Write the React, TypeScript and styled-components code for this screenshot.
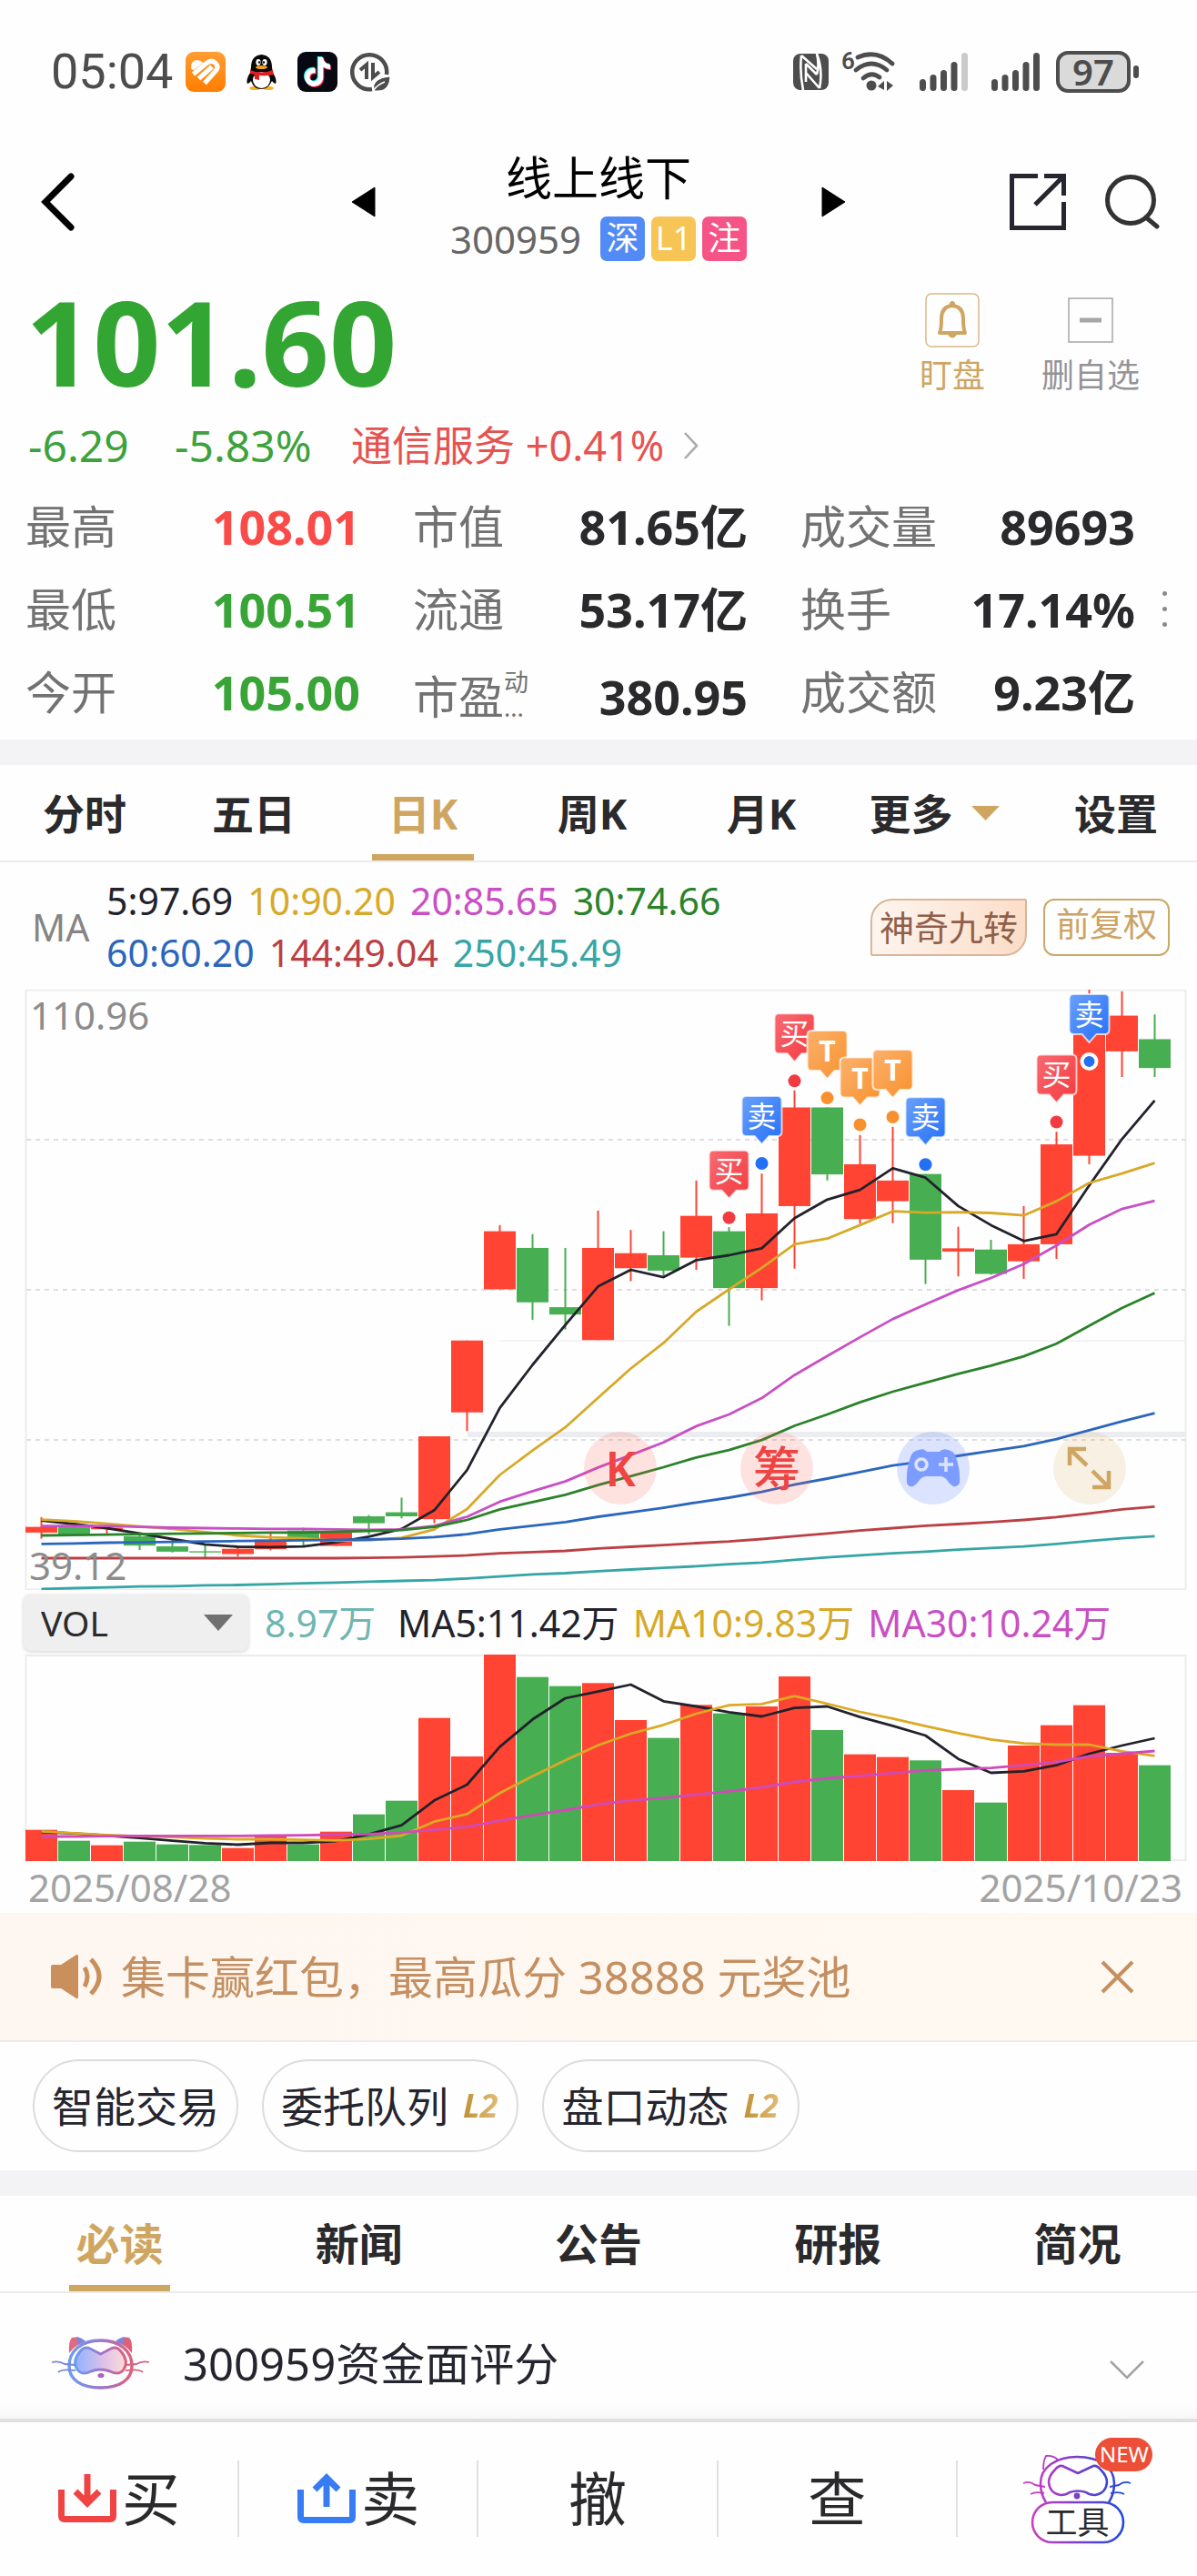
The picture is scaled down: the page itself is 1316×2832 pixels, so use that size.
import React from "react";
import styled, { createGlobalStyle } from "styled-components";
import { FaTiktok } from "react-icons/fa6";

const GOLD = "#cfa661";
const RED = "#ff4433";
const GREEN = "#48ae52";
const INK = "#2a2a2c";

const GlobalStyle = createGlobalStyle`
  * { box-sizing: border-box; }
  body {
    margin: 0;
    background: #fefefe;
    color: ${INK};
    font-family: "Noto Sans", "Noto Sans CJK SC", sans-serif;
  }
  button, select {
    font-family: inherit;
    color: inherit;
    background: none;
    border: 0;
    padding: 0;
    margin: 0;
    line-height: inherit;
  }
  svg { display: block; }
  h1, p, dl, dt, dd { margin: 0; font-weight: 400; }
`;

/* ---------- status bar ---------- */

const StatusBar = styled.div`
  display: flex;
  align-items: center;
  justify-content: space-between;
  height: 158px;
  padding: 0 73px 0 56px;
`;

const StatusLeft = styled.div`
  display: flex;
  align-items: center;
  gap: 14px;
`;

const StatusIcons = styled.div`
  display: flex;
  align-items: center;
  gap: 23px;
`;

const StatusRight = styled.div`
  display: flex;
  align-items: center;
  gap: 26px;
`;

const Clock = styled.span`
  font-family: Roboto, sans-serif;
  font-size: 54px;
  line-height: 60px;
  color: #4d4d4d;
`;

const Battery = styled.span`
  position: relative;
  margin-left: -8px;
  display: flex;
  align-items: center;
  justify-content: center;
  width: 82px;
  height: 46px;
  border: 4px solid #4d4d4d;
  border-radius: 13px;
  background: #dadada;
  color: #4d4d4d;
  font-size: 40px;
  font-weight: 600;
  line-height: 40px;
  &::after {
    content: "";
    position: absolute;
    right: -13px;
    width: 6px;
    height: 14px;
    border-radius: 3px;
    background: #4d4d4d;
  }
`;

const AppIcon = () => (
  <svg width="44" height="44" viewBox="0 0 44 44" aria-hidden="true">
    <defs>
      <linearGradient id="appOrange" x1="0" y1="0" x2="0" y2="1">
        <stop offset="0" stopColor="#ff9d33" />
        <stop offset="1" stopColor="#ff7e00" />
      </linearGradient>
    </defs>
    <rect width="44" height="44" rx="9" fill="url(#appOrange)" />
    <path d="M6.500 19 Q5 12 10 9.500 Q15 8 19.500 12 L9 20 Z" fill="#fff" />
    <g fill="none" stroke="#fff" strokeWidth="5.2">
      <path d="M8.500 24.500 L23 12.500 Q29 8 33 12.500 Q37 17 33 21 L21 34.500" />
      <path d="M14.500 29.500 L29 16.500" />
    </g>
  </svg>
);

const PenguinIcon = () => (
  <svg width="33" height="39" viewBox="0 0 33 39" aria-hidden="true">
    <ellipse cx="9" cy="37" rx="6" ry="2.2" fill="#f9b320" />
    <ellipse cx="24" cy="37" rx="6" ry="2.2" fill="#f9b320" />
    <path d="M4 20 Q-1 28 1 32 Q3 32 5 29 Q8 38 16 38 Q24 38 28 29 Q30 32 32 32 Q34 28 29 20 L28 14 Q28 1 16.500 0 Q5 1 5 14 Z" fill="#090909" />
    <ellipse cx="16.500" cy="28" rx="9.500" ry="9" fill="#fff" />
    <path d="M4 17 Q16 22 29 17 L30 22 Q22 24 14 23 L14 28 L9 27 L9 22 L4 21 Z" fill="#dd1f22" />
    <ellipse cx="13" cy="8.500" rx="2.600" ry="3.400" fill="#fff" />
    <ellipse cx="20" cy="8.500" rx="2.600" ry="3.400" fill="#fff" />
    <circle cx="14" cy="8.500" r="1.200" />
    <circle cx="19" cy="8.500" r="1.200" />
    <ellipse cx="16.500" cy="14" rx="6.500" ry="2" fill="#f5a21b" />
  </svg>
);

const TikTokTile = styled.span`
  position: relative;
  width: 44px;
  height: 44px;
  border-radius: 9px;
  background: #070812;
`;

const TikTokLayer = styled(FaTiktok)<{ $shift: number; $color: string }>`
  position: absolute;
  left: ${(p) => 6 + p.$shift}px;
  top: ${(p) => 6 + p.$shift}px;
  width: 32px;
  height: 32px;
  color: ${(p) => p.$color};
`;

const DataSaverIcon = () => (
  <svg width="44" height="44" viewBox="0 0 44 44" fill="none" stroke="#4d4d4d" aria-hidden="true">
    <path d="M24 41 A19 19 0 1 1 40 25" strokeWidth="4.500" />
    <path d="M18 30 V14 L11 20" strokeWidth="4" />
    <path d="M25 12 V28 L32 22" strokeWidth="4" />
    <path d="M27 42 Q24 30 43 28 Q42 43 30 42 Z" fill="#4d4d4d" strokeWidth="1" />
    <path d="M25 43 Q30 36 38 33" stroke="#fff" strokeWidth="1.600" />
  </svg>
);

const NfcIcon = () => (
  <svg width="39" height="40" viewBox="0 0 39 40" fill="none" aria-hidden="true">
    <rect width="39" height="40" rx="8" fill="#4d4d4d" />
    <path d="M9 2 Q7 20 11 40 M9 2 L26 17 M14 11 V31 M14 11 L26 23 M14 21 L29 38 M26 0 Q29 12 26 23 M26 0 Q33 18 29 38" stroke="#fff" strokeWidth="2.600" />
  </svg>
);

const WifiSix = styled.span`
  position: relative;
  display: block;
  width: 60px;
  height: 46px;
`;

const WifiGeneration = styled.span`
  position: absolute;
  left: 0;
  top: -2px;
  font-family: Roboto, sans-serif;
  font-size: 26px;
  line-height: 26px;
  font-weight: 600;
  color: #4d4d4d;
`;

const WifiIcon = () => (
  <svg width="60" height="46" viewBox="0 0 60 46" fill="none" stroke="#4d4d4d" strokeWidth="4.800" strokeLinecap="round" aria-hidden="true">
    <path d="M18 7 Q39 -2 56 14" />
    <path d="M16 21 Q33 7 50 21" />
    <path d="M24 30 Q33 22 42 29" />
    <circle cx="33" cy="38" r="5.500" fill="#4d4d4d" stroke="none" />
    <path d="M40 39 L47 33 V43 Z M50 33 V44 L57 38 Z" fill="#4d4d4d" stroke="none" />
  </svg>
);

const SIGNAL_BARS = [13, 18, 23, 32, 42];

const SignalIcon = ({ level }: { level: number }) => (
  <svg width="53" height="42" viewBox="0 0 53 42" aria-hidden="true">
    {SIGNAL_BARS.map((h, i) => (
      <rect key={h} x={i * 11.5} y={42 - h} width="7" height={h} rx="3.5" fill={i < level ? "#4d4d4d" : "#cacaca"} />
    ))}
  </svg>
);

/* ---------- header ---------- */

const Header = styled.header`
  display: grid;
  grid-template-columns: 1fr auto 1fr;
  padding: 0 40px;
`;

const IconButton = styled.button`
  display: flex;
  align-items: center;
  height: 128px;
`;

const HeaderCenter = styled.div`
  display: flex;
  gap: 82px;
`;

const TitleBlock = styled.div`
  display: flex;
  flex-direction: column;
  align-items: center;
  gap: 13px;
  padding-top: 7px;
`;

const Title = styled.h1`
  font-size: 51px;
  line-height: 60px;
  color: #000;
`;

const CodeRow = styled.div`
  display: flex;
  align-items: center;
  gap: 7px;
`;

const Code = styled.span`
  margin-right: 14px;
  font-size: 42px;
  line-height: 49px;
  color: #666;
`;

const Tag = styled.span<{ $bg: string }>`
  width: 49px;
  height: 49px;
  border-radius: 7px;
  background: ${(p) => p.$bg};
  color: #fff;
  font-size: 36px;
  line-height: 48px;
  text-align: center;
`;

const HeaderActions = styled.div`
  display: flex;
  justify-content: flex-end;
  gap: 42px;
`;

/* ---------- quote ---------- */

const Quote = styled.section`
  padding: 28px 0 7px 28px;
`;

const PriceRow = styled.div`
  display: flex;
  justify-content: space-between;
  padding-right: 63px;
`;

const Price = styled.p`
  font-size: 130px;
  font-weight: 700;
  line-height: 120px;
  color: #33a533;
`;

const WatchActions = styled.div`
  display: flex;
  gap: 62px;
  padding-top: 7px;
`;

const WatchButton = styled.button<{ $color: string }>`
  display: flex;
  flex-direction: column;
  align-items: center;
  gap: 11px;
  color: ${(p) => p.$color};
  font-size: 36px;
  line-height: 40px;
`;

const WatchIcon = styled.span`
  display: flex;
  align-items: center;
  height: 60px;
`;

const ChangeRow = styled.div`
  display: flex;
  align-items: center;
  margin-top: 23px;
  font-size: 48px;
  line-height: 64px;
  color: #3da23b;
`;

const Change = styled.span`
  width: 164px;
  padding-left: 3px;
`;

const ChangeRate = styled.span`
  width: 194px;
`;

const SectorLink = styled.a`
  display: flex;
  align-items: center;
  gap: 21px;
  color: #e65250;
  font-size: 45px;
  text-decoration: none;
`;

const QuoteBody = styled.div`
  display: flex;
  align-items: center;
  justify-content: space-between;
  margin-top: 11px;
  padding-right: 33px;
`;

const StatGrid = styled.dl`
  flex: 1;
  display: grid;
  grid-template-columns: repeat(3, 1fr);
  column-gap: 58px;
  margin-right: 30px;
`;

const Stat = styled.div<{ $noted?: boolean }>`
  display: flex;
  align-items: center;
  justify-content: space-between;
  height: 91px;
  padding-top: ${(p) => (p.$noted ? 10 : 0)}px;
  font-size: 50px;
  line-height: 60px;
`;

const StatLabel = styled.dt`
  display: flex;
  color: #727272;
`;

const StatValue = styled.dd<{ $color?: string }>`
  font-size: 52px;
  font-weight: 700;
  color: ${(p) => p.$color || INK};
`;

const StatNote = styled.span`
  display: flex;
  flex-direction: column;
  font-size: 27px;
  line-height: 28px;
`;

const MoreDots = styled.button`
  display: flex;
  flex-direction: column;
  gap: 12px;
`;

const Dot = styled.span`
  width: 5px;
  height: 5px;
  border-radius: 50%;
  background: #8a8a8a;
`;

const Divider = styled.div`
  height: 28px;
  background: #f3f3f5;
`;

/* ---------- tabs ---------- */

const PeriodTabs = styled.nav`
  display: grid;
  grid-template-columns: repeat(5, 186fr) 194fr 192fr;
  border-bottom: 2px solid #ebebec;
`;

const NewsTabs = styled.nav`
  display: grid;
  grid-template-columns: repeat(5, 1fr);
  border-bottom: 2px solid #ebebec;
`;

const Tab = styled.button<{ $active?: boolean; $size: number }>`
  display: flex;
  align-items: center;
  justify-content: center;
  gap: 20px;
  height: 105px;
  border-top: 7px solid transparent;
  border-bottom: 7px solid transparent;
  border-image: ${(p) =>
    p.$active
      ? `linear-gradient(90deg, transparent calc(50% - 56px), ${GOLD} calc(50% - 56px), ${GOLD} calc(50% + 56px), transparent calc(50% + 56px)) 0 0 7 0`
      : "none"};
  font-size: ${(p) => p.$size}px;
  font-weight: 700;
  line-height: 60px;
  color: ${(p) => (p.$active ? GOLD : INK)};
`;

const SettingsTab = styled(Tab)`
  padding-left: 14px;
`;

/* ---------- K-line chart ---------- */

const MaHeader = styled.div`
  display: flex;
  align-items: center;
  padding: 14px 30px 12px 35px;
`;

const MaName = styled.span`
  width: 82px;
  font-size: 41px;
  line-height: 57px;
  color: #858585;
`;

const MaLines = styled.div`
  flex: 1;
  font-size: 41px;
  line-height: 57px;
`;

const MaLine = styled.div`
  display: flex;
  gap: 16px;
`;

const Colored = styled.span<{ $color: string }>`
  color: ${(p) => p.$color};
`;

const NineTurnButton = styled.button`
  width: 172px;
  height: 63px;
  margin-right: 18px;
  border: 2px solid #dcb597;
  border-radius: 24px 2px 24px 2px;
  background: linear-gradient(100deg, #fef6f1, #fbdcc6);
  color: #8f5f4b;
  font-size: 38px;
  line-height: 56px;
`;

const AdjustButton = styled.button`
  width: 139px;
  height: 63px;
  padding-bottom: 6px;
  border: 2px solid #c9aa66;
  border-radius: 12px;
  color: #cba465;
  font-size: 37px;
  line-height: 52px;
`;

const ChartArea = styled.div`
  position: relative;
`;

const ChartSvg = styled.svg`
  width: 100%;
  height: auto;
  font-family: "Noto Sans", "Noto Sans CJK SC", sans-serif;
`;

const FloatingTools = styled.div`
  position: absolute;
  right: 78px;
  bottom: 94px;
  display: flex;
  gap: 92px;
`;

const FloatingButton = styled.button<{ $bg: string; $color: string }>`
  display: flex;
  align-items: center;
  justify-content: center;
  width: 80px;
  height: 80px;
  border-radius: 50%;
  background: ${(p) => p.$bg};
  color: ${(p) => p.$color};
  font-size: 52px;
  font-weight: 500;
  line-height: 60px;
`;

const KLabel = styled.span`
  font-weight: 600;
`;

type Candle = [up: 0 | 1, top: number, bottom: number, high: number, low: number];

/* Levels run from 20 at the top edge of the plot to 1496 at its bottom edge. */
const CANDLES: Candle[] = [
  [1, 1343, 1357, 1319, 1372],
  [0, 1344, 1362, 1344, 1366],
  [1, 1345, 1349, 1340, 1363],
  [0, 1366, 1389, 1357, 1400],
  [0, 1391, 1404, 1374, 1406],
  [0, 1403, 1406, 1385, 1418],
  [1, 1397, 1410, 1390, 1416],
  [1, 1374, 1398, 1360, 1401],
  [0, 1352, 1376, 1345, 1393],
  [1, 1357, 1390, 1357, 1390],
  [0, 1317, 1334, 1314, 1362],
  [0, 1307, 1317, 1271, 1322],
  [1, 1120, 1324, 1120, 1334],
  [1, 884, 1061, 884, 1107],
  [1, 615, 758, 600, 758],
  [0, 656, 790, 622, 833],
  [0, 802, 820, 656, 857],
  [1, 656, 883, 564, 883],
  [1, 669, 706, 612, 738],
  [0, 674, 712, 615, 724],
  [1, 577, 680, 490, 710],
  [0, 615, 755, 605, 848],
  [1, 571, 755, 473, 785],
  [1, 310, 553, 268, 707],
  [0, 310, 475, 310, 490],
  [1, 450, 585, 378, 596],
  [1, 490, 541, 358, 595],
  [0, 474, 685, 474, 745],
  [1, 657, 665, 604, 726],
  [0, 660, 720, 636, 722],
  [1, 647, 689, 553, 732],
  [1, 401, 647, 370, 683],
  [1, 70, 429, 20, 450],
  [1, 84, 172, 24, 235],
  [0, 142, 213, 81, 235],
];

const MA_SERIES: { color: string; levels: number[] }[] = [
  { color: "#bb4045", levels: [1420, 1420, 1420, 1420, 1420, 1420, 1420, 1420, 1420, 1420, 1419, 1418, 1416, 1413, 1408, 1405, 1402, 1396, 1392, 1388, 1383, 1379, 1373, 1366, 1359, 1352, 1346, 1340, 1336, 1331, 1326, 1319, 1310, 1300, 1293] },
  { color: "#36a5a5", levels: [1496, 1494, 1492, 1490, 1489, 1487, 1486, 1484, 1482, 1480, 1478, 1476, 1474, 1470, 1465, 1460, 1457, 1452, 1448, 1444, 1440, 1435, 1431, 1424, 1418, 1413, 1408, 1404, 1399, 1395, 1391, 1385, 1378, 1371, 1366] },
  { color: "#22222c", levels: [1327, 1336, 1346, 1359, 1373, 1386, 1392, 1393, 1391, 1381, 1367, 1348, 1302, 1203, 1050, 944, 846, 751, 710, 728, 686, 674, 657, 583, 537, 513, 460, 483, 553, 600, 639, 622, 502, 388, 293] },
  { color: "#d7a928", levels: [1325, 1329, 1335, 1342, 1348, 1356, 1364, 1369, 1371, 1377, 1376, 1370, 1349, 1299, 1215, 1155, 1098, 1025, 953, 890, 813, 758, 705, 647, 633, 600, 566, 569, 568, 570, 576, 541, 496, 473, 447] },
  { color: "#c84fc4", levels: [1341, 1341, 1341, 1343, 1345, 1346, 1347, 1348, 1348, 1349, 1350, 1349, 1341, 1318, 1281, 1255, 1231, 1197, 1166, 1135, 1095, 1066, 1026, 969, 922, 876, 831, 795, 760, 730, 696, 650, 599, 560, 540] },
  { color: "#2a822a", levels: [1364, 1363, 1362, 1361, 1360, 1359, 1358, 1357, 1357, 1355, 1353, 1351, 1343, 1326, 1300, 1282, 1264, 1240, 1218, 1196, 1172, 1154, 1129, 1094, 1066, 1036, 1010, 988, 966, 946, 923, 892, 848, 804, 767] },
  { color: "#2b66bd", levels: [1385, 1384, 1382, 1381, 1380, 1379, 1378, 1377, 1376, 1375, 1374, 1372, 1368, 1361, 1349, 1340, 1331, 1318, 1307, 1296, 1283, 1271, 1257, 1239, 1224, 1208, 1192, 1181, 1168, 1156, 1144, 1127, 1105, 1083, 1063] },
];

type MarkKind = "买" | "卖" | "T";

const MARKS: { index: number; level: number; kind: MarkKind }[] = [
  { index: 21, level: 416, kind: "买" },
  { index: 22, level: 282, kind: "卖" },
  { index: 23, level: 79, kind: "买" },
  { index: 24, level: 121, kind: "T" },
  { index: 25, level: 187, kind: "T" },
  { index: 26, level: 168, kind: "T" },
  { index: 27, level: 285, kind: "卖" },
  { index: 31, level: 180, kind: "买" },
  { index: 32, level: 31, kind: "卖" },
];

const MARK_FILL: Record<MarkKind, { id: string; from: string; to: string }> = {
  买: { id: "markBuy", from: "#f96a72", to: "#f23b40" },
  卖: { id: "markSell", from: "#6aa0fb", to: "#2470f5" },
  T: { id: "markT", from: "#fcb16d", to: "#f8912d" },
};

const cx = (i: number) => 45.5 + i * 36;
const levelY = (level: number) => (level - 20) / 2.24;
const volumeY = (level: number) => (level - 241) / 3;

const linePoints = (levels: number[], scale: (v: number) => number) =>
  levels.map((v, i) => `${cx(i)},${scale(v).toFixed(1)}`).join(" ");

const KLineChart = () => (
  <ChartSvg viewBox="0 0 1316 660" role="img" aria-label="日K线图">
    <defs>
      {Object.values(MARK_FILL).map((f) => (
        <linearGradient key={f.id} id={f.id} x1="0" y1="0" x2="1" y2="1">
          <stop offset="0" stopColor={f.from} />
          <stop offset="1" stopColor={f.to} />
        </linearGradient>
      ))}
    </defs>
    <rect x="28.5" y="0.5" width="1275" height="659" fill="none" stroke="#ececee" strokeWidth="2" />
    {[165, 330, 495].map((y) => (
      <line key={y} x1="29" x2="1303" y1={y} y2={y} stroke="#dedede" strokeWidth="2" strokeDasharray="5 5" />
    ))}
    <line x1="550" x2="1303" y1="386" y2="386" stroke="#f3f3f3" strokeWidth="2" />
    <line x1="514" x2="1303" y1="489" y2="489" stroke="#ecedf1" strokeWidth="6" />
    {CANDLES.map(([up, top, bottom, high, low], i) => (
      <g key={i} fill={up ? RED : GREEN}>
        <rect x={cx(i) - 1} y={levelY(high)} width="2" height={levelY(low) - levelY(high)} />
        <rect x={cx(i) - 17.5} y={levelY(top)} width="35" height={levelY(bottom) - levelY(top)} />
      </g>
    ))}
    {MA_SERIES.map((s) => (
      <polyline key={s.color} points={linePoints(s.levels, levelY)} fill="none" stroke={s.color} strokeWidth="2.8" strokeLinejoin="round" />
    ))}
    {MARKS.map(({ index, level, kind }) => {
      const f = MARK_FILL[kind];
      return (
        <g key={index} transform={`translate(${cx(index)} ${levelY(level)})`}>
          <path
            d="M-17 0 H17 Q22 0 22 5 V39 Q22 44 17 44 H8 L0 53 L-8 44 H-17 Q-22 44 -22 39 V5 Q-22 0 -17 0 Z"
            fill={`url(#${f.id})`}
            stroke="#fff"
            strokeOpacity="0.7"
            strokeWidth="2"
          />
          <text y="34" textAnchor="middle" fontSize="32" fontWeight={kind === "T" ? 700 : 400} fill="#fff">
            {kind}
          </text>
          <circle cy="74" r={index === 32 ? 8 : 7} fill={f.to} stroke="#fff" strokeWidth={index === 32 ? 4 : 0} />
        </g>
      );
    })}
    <text x="33" y="44" fontSize="42" fill="#8c8c8c">110.96</text>
    <text x="32" y="649" fontSize="42" fill="#8c8c8c">39.12</text>
  </ChartSvg>
);

const GamepadIcon = () => (
  <svg width="60" height="44" viewBox="0 0 60 44" aria-hidden="true">
    <path d="M14 2 Q20 0 23 4 H37 Q40 0 46 2 Q53 3 55 10 Q60 24 59 38 Q57 43 52 42 Q48 40 45 35 Q42 31 37 31 H23 Q18 31 15 35 Q12 40 8 42 Q2 43 1 38 Q0 24 5 10 Q7 3 14 2 Z" fill="#7d9cff" />
    <circle cx="17" cy="18" r="6" fill="none" stroke="#dbe3ff" strokeWidth="3.500" />
    <path d="M44 10 V26 M36 18 H52" stroke="#dbe3ff" strokeWidth="3.500" />
  </svg>
);

const ExpandIcon = () => (
  <svg width="50" height="48" viewBox="0 0 50 48" fill="none" stroke={GOLD} strokeWidth="4.500" aria-hidden="true">
    <path d="M21 3 H3 V21 M3 3 L22 21 M28 27 L46 45 M46 27 V45 H28" />
  </svg>
);

/* ---------- volume chart ---------- */

const VolumeHeader = styled.div`
  display: flex;
  align-items: center;
  height: 71px;
  padding-left: 26px;
  font-size: 41px;
  line-height: 60px;
`;

const IndicatorPicker = styled.div`
  position: relative;
  width: 247px;
  margin-right: 18px;
`;

const IndicatorSelect = styled.select`
  appearance: none;
  display: block;
  width: 100%;
  height: 62px;
  padding-left: 19px;
  border-radius: 8px;
  background: #efefef;
  box-shadow: 0 1px 4px rgba(0, 0, 0, 0.18);
  color: #2b2b2b;
  font-size: 39px;
`;

const PickerArrow = styled.span`
  position: absolute;
  right: 17px;
  top: 22px;
  border: 16px solid transparent;
  border-top: 18px solid #707070;
  border-bottom: 0;
  pointer-events: none;
`;

const VolumeNow = styled.span`
  width: 146px;
  color: #6fb6b2;
`;

const VolumeAverages = styled.div`
  display: flex;
  gap: 15px;
`;

const VOLUMES = [
  819, 855, 870, 858, 867, 869, 879, 839, 867, 825, 768, 723, 450, 577, 241, 315, 345, 335, 457, 516, 407, 435, 412,
  313, 490, 570, 579, 590, 688, 729, 541, 474, 408, 565, 606,
];

const VOLUME_MA: { color: string; levels: number[] }[] = [
  { color: "#22222c", levels: [826, 831, 838, 846, 855, 863, 868, 862, 862, 856, 834, 804, 722, 670, 545, 455, 385, 363, 340, 395, 412, 431, 445, 417, 412, 447, 476, 508, 585, 631, 626, 606, 568, 541, 517] },
  { color: "#dba924", levels: [824, 830, 836, 840, 843, 847, 850, 850, 852, 854, 849, 838, 792, 767, 698, 642, 590, 540, 502, 473, 436, 408, 404, 378, 403, 430, 452, 477, 500, 521, 534, 538, 538, 560, 575] },
  { color: "#d04ab8", levels: [841, 841, 840, 839, 839, 839, 839, 838, 837, 835, 833, 828, 819, 809, 789, 771, 754, 735, 722, 714, 703, 692, 679, 661, 649, 641, 632, 623, 619, 615, 606, 595, 577, 568, 559] },
];

const VolumeChart = () => (
  <ChartSvg viewBox="0 0 1316 228" role="img" aria-label="成交量图">
    <rect x="28.5" y="1" width="1275" height="225" fill="none" stroke="#ececee" strokeWidth="2" />
    {VOLUMES.map((v, i) => (
      <rect key={i} x={cx(i) - 17.5} y={volumeY(v)} width="35" height={227 - volumeY(v)} fill={CANDLES[i][0] ? RED : GREEN} />
    ))}
    {VOLUME_MA.map((s) => (
      <polyline key={s.color} points={linePoints(s.levels, volumeY)} fill="none" stroke={s.color} strokeWidth="2.8" strokeLinejoin="round" />
    ))}
  </ChartSvg>
);

const DateRow = styled.div`
  display: flex;
  justify-content: space-between;
  padding: 0 16px 0 31px;
  font-size: 42px;
  line-height: 56px;
  color: #a3a3a3;
`;

/* ---------- promo, shortcuts, news ---------- */

const Banner = styled.div`
  display: flex;
  align-items: center;
  height: 142px;
  padding: 0 69px 0 56px;
  border-bottom: 2px solid #ebebeb;
  background: linear-gradient(90deg, #fef6f0, #fff9f1);
  color: #c49062;
`;

const BannerText = styled.p`
  flex: 1;
  margin-left: 19px;
  font-size: 49px;
  line-height: 60px;
`;

const Shortcuts = styled.div`
  display: flex;
  gap: 26px;
  padding: 19px 36px 20px;
`;

const Pill = styled.button`
  display: flex;
  align-items: center;
  gap: 16px;
  height: 102px;
  padding: 0 19px;
  border: 2px solid #dcdcdd;
  border-radius: 51px;
  color: #25252f;
  font-size: 46px;
  line-height: 60px;
`;

const LevelTwo = styled.span`
  padding-right: 2px;
  background: linear-gradient(90deg, #bd9136, #e2bd78);
  background-clip: text;
  color: transparent;
  font-size: 36px;
  font-style: italic;
  font-weight: 700;
`;

const ScoreRow = styled.button`
  display: flex;
  align-items: center;
  width: 100%;
  height: 138px;
  padding: 16px 58px 0 56px;
  background: linear-gradient(180deg, #fefefe 88%, #f7f7f7);
  line-height: 60px;
  text-align: left;
`;

const ScoreText = styled.span`
  flex: 1;
  margin-left: 34px;
  font-size: 49px;
  color: #25252f;
`;

const TradeBar = styled.nav`
  display: grid;
  grid-template-columns: repeat(5, 1fr);
  align-items: center;
  height: 172px;
  border-top: 4px solid #e0e0e0;
`;

const TradeButton = styled.button`
  display: flex;
  align-items: center;
  justify-content: center;
  gap: 5px;
  height: 84px;
  border-right: 2px solid #e0e0e0;
  font-size: 64px;
  line-height: 80px;
  &:last-child {
    border-right: 0;
  }
`;

const ToolArt = styled.span`
  position: relative;
  display: block;
  width: 120px;
  height: 100px;
`;

const ToolLabel = styled.span`
  position: absolute;
  left: 0;
  right: 0;
  top: 57px;
  text-align: center;
  font-size: 35px;
  line-height: 38px;
`;

const NewBadge = styled.span`
  position: absolute;
  left: 80px;
  top: -17px;
  width: 63px;
  height: 37px;
  border-radius: 19px;
  background: #ec4e37;
  color: #fff;
  font-size: 24px;
  line-height: 36px;
  text-align: center;
`;

const CatIcon = () => (
  <svg width="111" height="60" viewBox="0 0 111 60" fill="none" aria-hidden="true">
    <defs>
      <linearGradient id="catFace" x1="0" y1="0" x2="1" y2="0">
        <stop offset="0" stopColor="#6d9df0" />
        <stop offset="0.500" stopColor="#9a77cf" />
        <stop offset="1" stopColor="#e0607a" />
      </linearGradient>
      <linearGradient id="catGlass" x1="0" y1="0" x2="1" y2="0">
        <stop offset="0" stopColor="#8fb2ff" />
        <stop offset="0.600" stopColor="#e2c3e6" />
        <stop offset="1" stopColor="#fbdcd8" />
      </linearGradient>
    </defs>
    <path d="M20 19 Q19 6 23 2 Q31 0 37 6 Q26 11 20 19 Z" fill="#df6a83" />
    <path d="M28 1 Q34 2 38 6 L30 10 Z" fill="#7d85dd" />
    <path d="M89 19 Q90 6 86 2 Q78 0 72 6 Q83 11 89 19 Z" fill="#df5f78" />
    <path d="M81 1 Q75 2 71 6 L79 10 Z" fill="#7d85dd" />
    <path d="M54.500 5 C76 5 89 17 89 33 C89 48 76 57 54.500 57 C33 57 20 48 20 33 C20 17 33 5 54.500 5 Z" stroke="url(#catFace)" strokeWidth="3.400" fill="#fff" />
    <path d="M54.500 20 L43 14 Q37 11 32 17 Q23 28 29 37 Q34 44 44 39 Q54 35 65 39 Q75 44 80 37 Q86 28 77 17 Q72 11 66 14 Z" fill="url(#catGlass)" stroke="url(#catFace)" strokeWidth="3" strokeLinejoin="round" />
    <path d="M1 29 Q9 27 15 31 L27 32 M8 40 Q12 36 27 38" stroke="#7b86d8" strokeWidth="1.800" />
    <path d="M108 29 Q100 27 94 31 L82 32 M101 40 Q97 36 82 38" stroke="#cf6585" strokeWidth="1.800" />
    <ellipse cx="55" cy="43.500" rx="3.600" ry="2.600" fill="#a867c0" />
  </svg>
);

const ToolCatIcon = () => (
  <svg width="120" height="100" viewBox="0 0 120 100" fill="none" aria-hidden="true">
    <defs>
      <linearGradient id="toolStroke" gradientUnits="userSpaceOnUse" x1="10" y1="0" x2="110" y2="0">
        <stop offset="0" stopColor="#cc3fc0" />
        <stop offset="0.500" stopColor="#7a3fc8" />
        <stop offset="1" stopColor="#2049dc" />
      </linearGradient>
    </defs>
    <g stroke="url(#toolStroke)" strokeWidth="2.600" strokeLinejoin="round">
      <path d="M23 18 Q23 8 26 3 Q33 2 39 7 M99 18 Q99 8 96 3 Q89 2 83 7" strokeWidth="1.800" />
      <path d="M26 54 Q20 45 20 33 C20 15 38 4 60 4 C84 4 101 15 101 33 Q101 45 95 54" />
      <path d="M61 22 L44 14 Q40 13 36 18 Q29 25 29 32 Q30 44 42 46 Q48 46 52 43 Q61 40 70 43 Q74 46 80 46 Q92 44 93 32 Q93 25 86 18 Q82 13 78 14 Z" />
      <rect x="11" y="54" width="100" height="44" rx="22" fill="#fff" />
      <path d="M1 33 Q8 30 14 35 L25 37 M9 45 Q14 42 24 44 M119 33 Q112 30 106 35 L96 37 M112 45 Q107 42 97 44" strokeWidth="1.800" />
    </g>
    <circle cx="60" cy="47" r="3.400" fill="#7a3fc8" />
  </svg>
);

const PERIODS = ["分时", "五日", "日K", "周K", "月K"];
const NEWS = ["必读", "新闻", "公告", "研报", "简况"];

const STATS: { label: string; value: string; color?: string; note?: string }[] = [
  { label: "最高", value: "108.01", color: "#fb4b48" },
  { label: "市值", value: "81.65亿" },
  { label: "成交量", value: "89693" },
  { label: "最低", value: "100.51", color: "#38a536" },
  { label: "流通", value: "53.17亿" },
  { label: "换手", value: "17.14%" },
  { label: "今开", value: "105.00", color: "#38a536" },
  { label: "市盈", value: "380.95", note: "动" },
  { label: "成交额", value: "9.23亿" },
];

export default function App() {
  return (
    <>
      <GlobalStyle />
      <StatusBar>
        <StatusLeft>
          <Clock>05:04</Clock>
          <StatusIcons>
            <AppIcon />
            <PenguinIcon />
            <TikTokTile>
              <TikTokLayer $shift={-1} $color="#25f4ee" />
              <TikTokLayer $shift={1} $color="#fe2c55" />
              <TikTokLayer $shift={0} $color="#fff" />
            </TikTokTile>
          </StatusIcons>
          <DataSaverIcon />
        </StatusLeft>
        <StatusRight>
          <StatusLeft>
            <NfcIcon />
            <WifiSix>
              <WifiGeneration>6</WifiGeneration>
              <WifiIcon />
            </WifiSix>
          </StatusLeft>
          <SignalIcon level={4} />
          <SignalIcon level={5} />
          <Battery>97</Battery>
        </StatusRight>
      </StatusBar>

      <Header>
        <IconButton aria-label="返回">
          <svg width="44" height="68" viewBox="0 0 44 68" fill="none" stroke="#000" strokeWidth="7" strokeLinecap="round">
            <path d="M38 6 L10 34 L38 62" />
          </svg>
        </IconButton>
        <HeaderCenter>
          <IconButton aria-label="上一只">
            <svg width="27" height="34" viewBox="0 0 27 34"><path d="M26 1 V33 L1 17 Z" stroke="#000" strokeLinejoin="round" /></svg>
          </IconButton>
          <TitleBlock>
            <Title>线上线下</Title>
            <CodeRow>
              <Code>300959</Code>
              <Tag $bg="#528bf5">深</Tag>
              <Tag $bg="#f7c456">L1</Tag>
              <Tag $bg="#f65386">注</Tag>
            </CodeRow>
          </TitleBlock>
          <IconButton aria-label="下一只">
            <svg width="27" height="34" viewBox="0 0 27 34"><path d="M1 1 V33 L26 17 Z" stroke="#000" strokeLinejoin="round" /></svg>
          </IconButton>
        </HeaderCenter>
        <HeaderActions>
          <IconButton aria-label="分享">
            <svg width="62" height="62" viewBox="0 0 62 62" fill="none" stroke="#262631" strokeWidth="5">
              <path d="M31 2.500 H2.500 V59.500 H59.500 V31 M38 2.500 H59.500 V24 M59 3 L28 34" />
            </svg>
          </IconButton>
          <IconButton aria-label="搜索">
            <svg width="62" height="62" viewBox="0 0 62 62" fill="none" stroke="#333" strokeWidth="5">
              <circle cx="29" cy="29" r="25.500" />
              <path d="M46 48 L58 58" strokeLinecap="round" />
            </svg>
          </IconButton>
        </HeaderActions>
      </Header>

      <Quote>
        <PriceRow>
          <Price>101.60</Price>
          <WatchActions>
            <WatchButton $color={GOLD}>
              <WatchIcon>
                <svg width="60" height="60" viewBox="0 0 60 60" fill="none" stroke={GOLD}>
                  <rect x="1" y="1" width="58" height="58" rx="6" stroke="#d9b98a" strokeWidth="1.500" />
                  <path d="M16 44 Q18 40 18 28 Q18 15 30 14 Q42 15 42 28 Q42 40 44 44 Z" strokeWidth="4" strokeLinejoin="round" />
                  <circle cx="30" cy="12" r="3" fill={GOLD} stroke="none" />
                  <path d="M25 46 Q30 53 35 46 Z" fill={GOLD} stroke="none" />
                </svg>
              </WatchIcon>
              盯盘
            </WatchButton>
            <WatchButton $color="#939498">
              <WatchIcon>
                <svg width="50" height="50" viewBox="0 0 50 50" fill="none" stroke="#a6a6a6">
                  <rect x="1" y="1" width="48" height="48" strokeWidth="1.500" />
                  <path d="M13 25 H37" strokeWidth="5" />
                </svg>
              </WatchIcon>
              删自选
            </WatchButton>
          </WatchActions>
        </PriceRow>
        <ChangeRow>
          <Change>-6.29</Change>
          <ChangeRate>-5.83%</ChangeRate>
          <SectorLink href="#sector">
            通信服务 +0.41%
            <svg width="18" height="32" viewBox="0 0 18 32" fill="none" stroke="#a9a9a9" strokeWidth="2.500">
              <path d="M2 2 L15 16 L2 30" />
            </svg>
          </SectorLink>
        </ChangeRow>
        <QuoteBody>
          <StatGrid>
            {STATS.map((s) => (
              <Stat key={s.label} $noted={!!s.note}>
                <StatLabel>
                  {s.label}
                  {s.note && (
                    <StatNote>
                      <span>{s.note}</span>
                      <span>...</span>
                    </StatNote>
                  )}
                </StatLabel>
                <StatValue $color={s.color}>{s.value}</StatValue>
              </Stat>
            ))}
          </StatGrid>
          <MoreDots aria-label="更多数据">
            <Dot />
            <Dot />
            <Dot />
          </MoreDots>
        </QuoteBody>
      </Quote>

      <Divider />

      <PeriodTabs>
        {PERIODS.map((p) => (
          <Tab key={p} $size={46} $active={p === "日K"}>{p}</Tab>
        ))}
        <Tab $size={46}>
          更多
          <svg width="31" height="16" viewBox="0 0 31 16"><path d="M0 0 H31 L15.500 16 Z" fill={GOLD} /></svg>
        </Tab>
        <SettingsTab $size={46}>设置</SettingsTab>
      </PeriodTabs>

      <MaHeader>
        <MaName>MA</MaName>
        <MaLines>
          <MaLine>
            <Colored $color="#22222c">5:97.69</Colored>
            <Colored $color="#d7a928">10:90.20</Colored>
            <Colored $color="#c84fc4">20:85.65</Colored>
            <Colored $color="#2a822a">30:74.66</Colored>
          </MaLine>
          <MaLine>
            <Colored $color="#2b66bd">60:60.20</Colored>
            <Colored $color="#bb4045">144:49.04</Colored>
            <Colored $color="#36a5a5">250:45.49</Colored>
          </MaLine>
        </MaLines>
        <NineTurnButton>神奇九转</NineTurnButton>
        <AdjustButton>前复权</AdjustButton>
      </MaHeader>

      <ChartArea>
        <KLineChart />
        <FloatingTools>
          <FloatingButton $bg="rgba(255, 80, 70, 0.16)" $color="#ef4444">
            <KLabel>K</KLabel>
          </FloatingButton>
          <FloatingButton $bg="rgba(255, 80, 70, 0.16)" $color="#ef4444">筹</FloatingButton>
          <FloatingButton $bg="rgba(80, 120, 255, 0.2)" $color="#7d9cff" aria-label="游戏">
            <GamepadIcon />
          </FloatingButton>
          <FloatingButton $bg="rgba(210, 170, 90, 0.16)" $color={GOLD} aria-label="全屏">
            <ExpandIcon />
          </FloatingButton>
        </FloatingTools>
      </ChartArea>

      <VolumeHeader>
        <IndicatorPicker>
          <IndicatorSelect aria-label="指标">
            <option>VOL</option>
          </IndicatorSelect>
          <PickerArrow />
        </IndicatorPicker>
        <VolumeNow>8.97万</VolumeNow>
        <VolumeAverages>
          <Colored $color="#22222c">MA5:11.42万</Colored>
          <Colored $color="#d7a928">MA10:9.83万</Colored>
          <Colored $color="#c84fc4">MA30:10.24万</Colored>
        </VolumeAverages>
      </VolumeHeader>
      <VolumeChart />
      <DateRow>
        <span>2025/08/28</span>
        <span>2025/10/23</span>
      </DateRow>

      <Banner>
        <svg width="58" height="50" viewBox="0 0 58 50" fill="none" aria-hidden="true">
          <path d="M0 14 Q0 12 2 12 H11 L28 1 Q30 0 30 3 V47 Q30 50 28 49 L11 38 H2 Q0 38 0 36 Z" fill="#c98f5c" />
          <path d="M37 15 Q43 25 37 36 M44 6 Q62 25 44 44" stroke="#c98f5c" strokeWidth="5" />
        </svg>
        <BannerText>集卡赢红包，最高瓜分 38888 元奖池</BannerText>
        <button aria-label="关闭">
          <svg width="37" height="37" viewBox="0 0 37 37" fill="none" stroke="#c49062" strokeWidth="4">
            <path d="M2 2 L35 35 M35 2 L2 35" />
          </svg>
        </button>
      </Banner>

      <Shortcuts>
        <Pill>智能交易</Pill>
        <Pill>委托队列 <LevelTwo>L2</LevelTwo></Pill>
        <Pill>盘口动态 <LevelTwo>L2</LevelTwo></Pill>
      </Shortcuts>

      <Divider />

      <NewsTabs>
        {NEWS.map((n) => (
          <Tab key={n} $size={48} $active={n === "必读"}>{n}</Tab>
        ))}
      </NewsTabs>

      <ScoreRow>
        <CatIcon />
        <ScoreText>300959资金面评分</ScoreText>
        <svg width="38" height="38" viewBox="0 0 38 38" fill="none" stroke="#a3a3a5" strokeWidth="2.500">
          <path d="M1 17 L19 35 L37 17" />
        </svg>
      </ScoreRow>

      <TradeBar>
        <TradeButton>
          <svg width="66" height="56" viewBox="0 0 66 56" fill="none" stroke="#f04444" strokeWidth="7" aria-hidden="true">
            <path d="M4.500 18 V47 Q4.500 50.500 8 50.500 H58 Q61.500 50.500 61.500 47 V18 M33 1 V30 M20 20 L33 33 L46 20" />
          </svg>
          买
        </TradeButton>
        <TradeButton>
          <svg width="66" height="56" viewBox="0 0 66 56" fill="none" stroke="#377cf2" strokeWidth="7" aria-hidden="true">
            <path d="M4.500 18 V48 Q4.500 51.500 8 51.500 H58 Q61.500 51.500 61.500 48 V18 M33 37 V6 M20 18 L33 5 L46 18" />
          </svg>
          卖
        </TradeButton>
        <TradeButton>撤</TradeButton>
        <TradeButton>查</TradeButton>
        <TradeButton>
          <ToolArt>
            <ToolCatIcon />
            <ToolLabel>工具</ToolLabel>
            <NewBadge>NEW</NewBadge>
          </ToolArt>
        </TradeButton>
      </TradeBar>
    </>
  );
}
